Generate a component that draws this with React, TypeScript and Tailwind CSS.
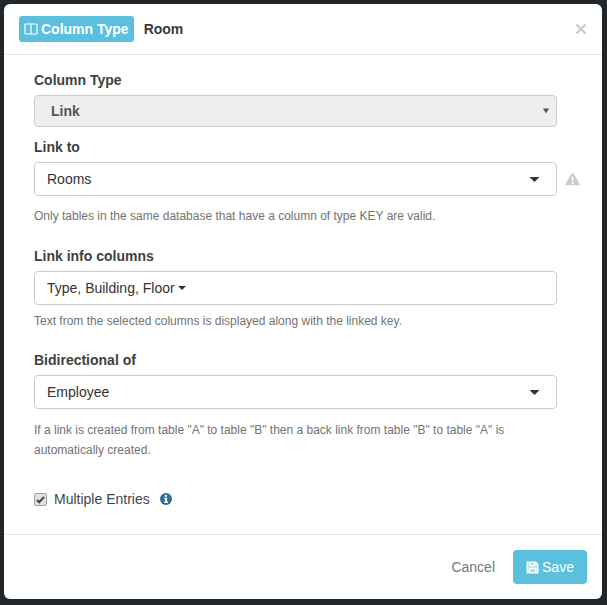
import React from "react";

function Caret({ className, viewBox = "0 0 10 5" }: { className: string; viewBox?: string }) {
  const path = viewBox === "0 0 6 5" ? "M0 0h6L3 5z" : "M0 0h10L5 5z";
  return (
    <svg viewBox={viewBox} className={className} fill="currentColor">
      <path d={path} />
    </svg>
  );
}

function Label({ children }: { children: React.ReactNode }) {
  return <div className="text-[14px] leading-[20px] font-bold text-[#3f3f3f]">{children}</div>;
}

function Box({ children, caret = true }: { children: React.ReactNode; caret?: boolean }) {
  return (
    <div className="flex h-[34px] w-[523px] items-center justify-between rounded-[4px] border border-[#cccccc] bg-white pl-[12px] pr-[16px] text-[14px] text-[#333333]">
      <span className="flex items-center">{children}</span>
      {caret && <Caret className="h-[5px] w-[11px] text-[#333333]" />}
    </div>
  );
}

function Help({ children }: { children: React.ReactNode }) {
  return <p className="text-[12px] leading-[20px] text-[#737373]">{children}</p>;
}

export default function App() {
  return (
    <div
      className="h-[605px] w-[607px] overflow-hidden bg-[#20262a] pl-[4px] pt-[4px] text-[#333333]"
      style={{ fontFamily: '"Liberation Sans", Arial, sans-serif' }}
    >
      <div className="flex h-[595px] w-[598px] flex-col rounded-[6px] bg-white">
        <header className="flex h-[51px] shrink-0 items-center border-b border-[#e5e5e5] pl-[15px] pr-[15px]">
          <span className="flex h-[26px] items-center gap-[3px] rounded-[3px] bg-[#5bc0de] px-[5px] text-[14px] font-bold text-white">
            <svg viewBox="0 0 14 12" className="h-[12px] w-[14px]" fill="none" stroke="currentColor" strokeWidth="1.2">
              <rect x="1" y="1" width="12" height="10" rx="1" />
              <path d="M7 1v10" />
            </svg>
            Column Type
          </span>
          <span className="ml-[10px] text-[14px] font-bold text-[#3a3a3a]">Room</span>
          <svg viewBox="0 0 10 10" className="ml-auto mr-[1px] h-[10px] w-[10px] text-[#c9c9c9]" stroke="currentColor" strokeWidth="2.2">
            <path d="M0.5 0.5l9 9M9.5 0.5l-9 9" />
          </svg>
        </header>

        <main className="flex-1 pl-[30px] pt-[15px]">
          <Label>Column Type</Label>
          <div className="mt-[5px] flex h-[32px] w-[523px] items-center justify-between rounded-[4px] border border-[#cccccc] bg-[#eeeeee] pl-[16px] pr-[7px] text-[14px] font-bold text-[#555555]">
            <span>Link</span>
            <Caret viewBox="0 0 6 5" className="h-[6px] w-[6px] text-[#555555]" />
          </div>

          <div className="mt-[10px]">
            <Label>Link to</Label>
          </div>
          <div className="mt-[5px] flex items-center">
            <Box>Rooms</Box>
            <svg viewBox="0 0 16 14" className="ml-[8px] h-[14px] w-[15px] text-[#cccccc]">
              <path fill="currentColor" d="M8 0.5c.5 0 .9.3 1.1.7l6.5 11c.4.7-.1 1.5-.9 1.5H1.3c-.8 0-1.3-.8-.9-1.5l6.5-11C7.1.8 7.5.5 8 .5z" />
              <path fill="#ffffff" d="M7 4.5h2l-.2 5H7.200zM7 10.500h2v2H7z" />
            </svg>
          </div>
          <div className="mt-[10px]">
            <Help>Only tables in the same database that have a column of type KEY are valid.</Help>
          </div>

          <div className="mt-[20px]">
            <Label>Link info columns</Label>
          </div>
          <div className="mt-[5px]">
            <Box caret={false}>
              Type, Building, Floor
              <Caret className="ml-[3px] h-[4px] w-[8px] text-[#333333]" />
            </Box>
          </div>
          <div className="mt-[6px]">
            <Help>Text from the selected columns is displayed along with the linked key.</Help>
          </div>

          <div className="mt-[19px]">
            <Label>Bidirectional of</Label>
          </div>
          <div className="mt-[5px]">
            <Box>Employee</Box>
          </div>
          <div className="mt-[11px] w-[523px]">
            <Help>
              If a link is created from table "A" to table "B" then a back link from table "B" to table "A" is automatically created.
            </Help>
          </div>

          <div className="mt-[29px] flex h-[20px] items-center text-[14px] text-[#3f4650]">
            <span className="flex h-[13px] w-[13px] items-center justify-center rounded-[2px] border border-[#a0a0a0] bg-[#e2e2e2]">
              <svg viewBox="0 0 10 10" className="h-[9px] w-[9px]" fill="none" stroke="#444444" strokeWidth="2.2">
                <path d="M1 5.500l2.500 2.500L9 2" />
              </svg>
            </span>
            <span className="ml-[7px]">Multiple Entries</span>
            <svg viewBox="0 0 12 12" className="ml-[10px] h-[12px] w-[12px]">
              <circle cx="6" cy="6" r="6" fill="#2a6f97" />
              <path fill="#ffffff" d="M4.800 2h2.200v1.700H4.800zM4.300 4.800h2.800v3.700h.8V10H4.300V8.500h.8V6.300h-.8z" />
            </svg>
          </div>
        </main>

        <footer className="flex h-[65px] shrink-0 items-center justify-end border-t border-[#e5e5e5] pr-[15px]">
          <span className="mr-[18px] text-[14px] text-[#777777]">Cancel</span>
          <span className="flex h-[34px] w-[74px] items-center justify-center gap-[3px] rounded-[4px] bg-[#5bc0de] text-[14px] text-white">
            <svg viewBox="0 0 14 14" className="h-[13px] w-[13px]" fill="none" stroke="currentColor" strokeWidth="1.8">
              <path d="M1.500 1.500h9l2 2v9h-11z" fillOpacity="0.35" fill="currentColor" />
              <path d="M4 1.500v3.500h5.500v-3.500M3.800 12.500v-4.500h6.400v4.500" />
            </svg>
            Save
          </span>
        </footer>
      </div>
    </div>
  );
}
